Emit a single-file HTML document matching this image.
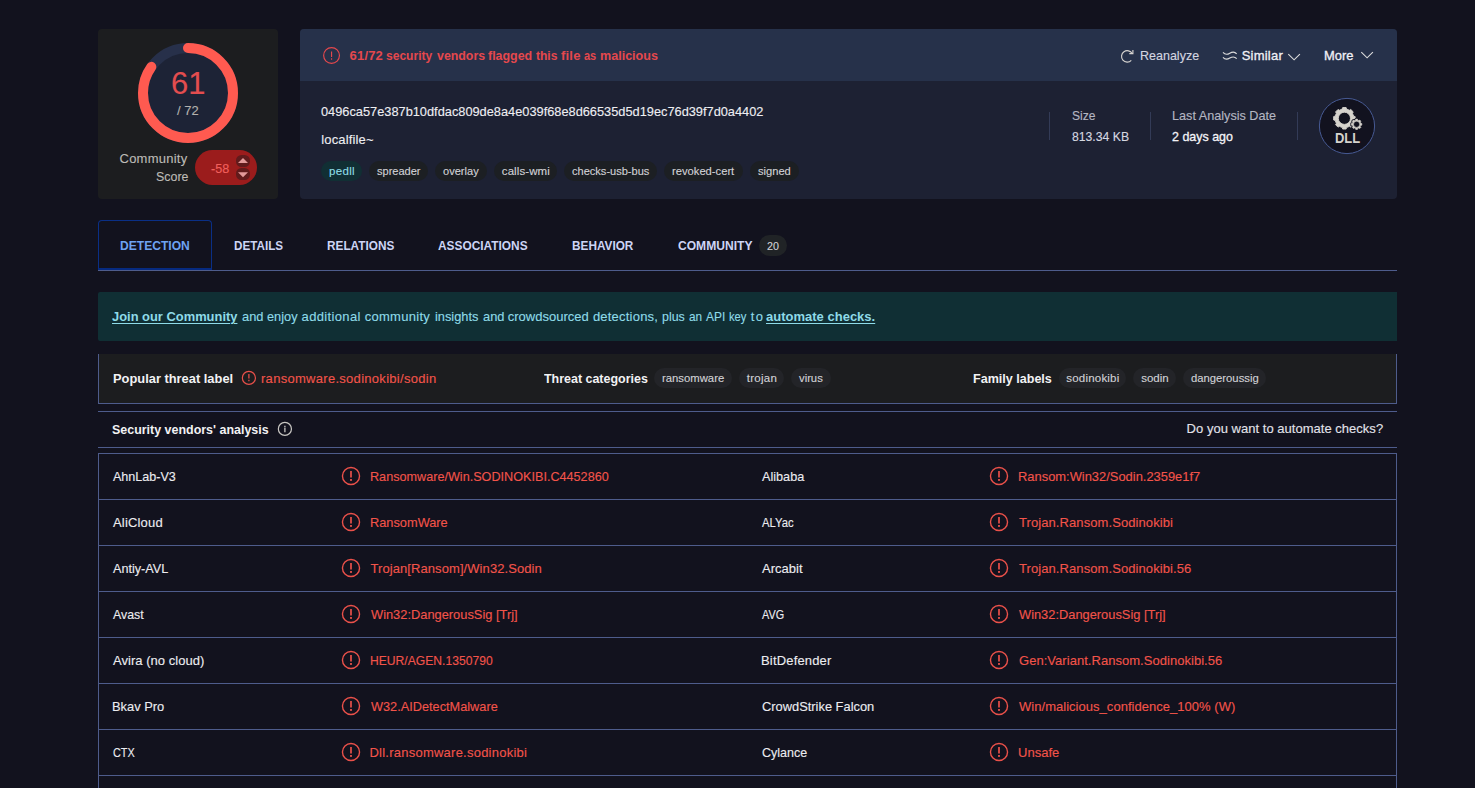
<!DOCTYPE html>
<html lang="en">
<head>
<meta charset="utf-8">
<title>VirusTotal - File - 0496ca57e387b10dfdac809de8a4e039f68e8d66535d5d19ec76d39f7d0a4402</title>
<style>
*{box-sizing:border-box;margin:0;padding:0}
html,body{width:1475px;height:788px;overflow:hidden;background:#12121e}
body{position:relative;font-family:"Liberation Sans",sans-serif;color:#e6e6ec}
.b{position:absolute;display:block}
.t{position:absolute;display:block;white-space:nowrap;line-height:20px;height:20px;transform-origin:0 0;-webkit-text-stroke:0.12px currentColor}
.p{position:absolute;display:block;border-radius:11px}
.a{position:absolute;display:block;overflow:visible}
svg{position:absolute;display:block;overflow:visible}
</style>
</head>
<body>
<!-- score card -->
<div class="b" style="left:98px;top:28.8px;width:180px;height:169.8px;background:#1c1d1f;border-radius:4px"></div>
<svg style="left:138px;top:43px" width="100" height="100" viewBox="-50 -50 100 100">
  <circle r="45" fill="#1d2336" stroke="#27304a" stroke-width="10"/>
  <circle r="45" fill="none" stroke="#ff5a50" stroke-width="10" stroke-linecap="round" stroke-dasharray="239.55 282.74" transform="rotate(-90)"/>
</svg>
<div class="b" style="left:195px;top:150px;width:62px;height:35px;border-radius:17.5px;background:#9b1c1c"></div>
<div class="b" style="left:236.2px;top:155.2px;width:13.8px;height:11.8px;border-radius:5.5px;background:#611b1c"></div>
<div class="b" style="left:236.2px;top:168.3px;width:13.8px;height:11.3px;border-radius:5.5px;background:#611b1c"></div>
<svg style="left:236px;top:155px" width="14" height="26" viewBox="0 0 14 26"><path d="M2 8.1L7 3.1L12 8.1Z" fill="#e39a9a"/><path d="M2 17.3L7 22.3L12 17.3Z" fill="#e39a9a"/></svg>

<!-- header card -->
<div class="b" style="left:299.5px;top:29.4px;width:1097.2px;height:169.3px;background:#1d2133;border-radius:4px;overflow:hidden"><div class="b" style="left:0;top:0;width:1098px;height:51.6px;background:#26314a"></div></div>
<div class="b" style="left:1049px;top:112px;width:1px;height:28px;background:#333b57"></div>
<div class="b" style="left:1150px;top:112px;width:1px;height:28px;background:#333b57"></div>
<div class="b" style="left:1297px;top:112px;width:1px;height:28px;background:#333b57"></div>
<!-- DLL icon -->
<svg style="left:1319px;top:98px" width="56" height="56" viewBox="-28 -28 56 56">
  <circle r="27.6" fill="#12121f" stroke="#475a94" stroke-width="1"/>
  <path fill="#d6d3cd" fill-rule="evenodd" stroke="#d6d3cd" stroke-width="0.9" stroke-linejoin="round" d="M-4.74 -16.96 L-4.31 -18.47 L-0.89 -18.47 L-0.46 -16.96 L2.43 -15.76 L3.81 -16.52 L6.22 -14.11 L5.46 -12.73 L6.66 -9.84 L8.17 -9.41 L8.17 -5.99 L6.66 -5.56 L5.46 -2.67 L6.22 -1.29 L3.81 1.12 L2.43 0.36 L-0.46 1.56 L-0.89 3.07 L-4.31 3.07 L-4.74 1.56 L-7.63 0.36 L-9.01 1.12 L-11.42 -1.29 L-10.66 -2.67 L-11.86 -5.56 L-13.37 -5.99 L-13.37 -9.41 L-11.86 -9.84 L-10.66 -12.73 L-11.42 -14.11 L-9.01 -16.52 L-7.63 -15.76Z M-8.70 -7.70 a6.1 6.1 0 1 0 12.2 0 a6.1 6.1 0 1 0 -12.2 0Z"/>
  <path fill="#12121f" stroke="#12121f" stroke-width="2.2" stroke-linejoin="round" d="M8.56 -5.87 L8.77 -6.93 L10.43 -6.93 L10.64 -5.87 L11.81 -5.39 L12.72 -5.99 L13.89 -4.82 L13.29 -3.91 L13.77 -2.74 L14.83 -2.53 L14.83 -0.87 L13.77 -0.66 L13.29 0.51 L13.89 1.42 L12.72 2.59 L11.81 1.99 L10.64 2.47 L10.43 3.53 L8.77 3.53 L8.56 2.47 L7.39 1.99 L6.48 2.59 L5.31 1.42 L5.91 0.51 L5.43 -0.66 L4.37 -0.87 L4.37 -2.53 L5.43 -2.74 L5.91 -3.91 L5.31 -4.82 L6.48 -5.99 L7.39 -5.39Z"/>
  <path fill="#d6d3cd" fill-rule="evenodd" stroke="#d6d3cd" stroke-width="0.6" stroke-linejoin="round" d="M8.56 -5.87 L8.77 -6.93 L10.43 -6.93 L10.64 -5.87 L11.81 -5.39 L12.72 -5.99 L13.89 -4.82 L13.29 -3.91 L13.77 -2.74 L14.83 -2.53 L14.83 -0.87 L13.77 -0.66 L13.29 0.51 L13.89 1.42 L12.72 2.59 L11.81 1.99 L10.64 2.47 L10.43 3.53 L8.77 3.53 L8.56 2.47 L7.39 1.99 L6.48 2.59 L5.31 1.42 L5.91 0.51 L5.43 -0.66 L4.37 -0.87 L4.37 -2.53 L5.43 -2.74 L5.91 -3.91 L5.31 -4.82 L6.48 -5.99 L7.39 -5.39Z M6.50 -1.70 a3.1 3.1 0 1 0 6.2 0 a3.1 3.1 0 1 0 -6.2 0Z"/>
</svg>

<!-- tabs -->
<div class="b" style="left:98px;top:270px;width:1299px;height:1px;background:#4e5c8c"></div>
<div class="b" style="left:98px;top:220px;width:114px;height:50px;border:1px solid #0a2f86;border-bottom:2px solid #062a80;border-radius:4px 4px 0 0"></div>

<!-- banner -->
<div class="b" style="left:98px;top:292px;width:1299px;height:49px;background:#102f34;border-radius:2px 0 0 2px"></div>

<!-- threat row -->
<div class="b" style="left:98px;top:354px;width:1299px;height:50px;background:#1c1d1f;border:1px solid #4e5c8c;border-top:none"></div>

<!-- vendors header -->
<div class="b" style="left:98px;top:411px;width:1299px;height:1px;background:#4e5c8c"></div>
<div class="b" style="left:98px;top:447px;width:1299px;height:1px;background:#4e5c8c"></div>

<!-- table -->
<div class="b" style="left:98px;top:453px;width:1299px;height:400px;border:1px solid #4e5c8c;border-bottom:none"></div>
<div class="b" style="left:98px;top:499px;width:1299px;height:1px;background:#4e5c8c"></div>
<div class="b" style="left:98px;top:545px;width:1299px;height:1px;background:#4e5c8c"></div>
<div class="b" style="left:98px;top:591px;width:1299px;height:1px;background:#4e5c8c"></div>
<div class="b" style="left:98px;top:637px;width:1299px;height:1px;background:#4e5c8c"></div>
<div class="b" style="left:98px;top:683px;width:1299px;height:1px;background:#4e5c8c"></div>
<div class="b" style="left:98px;top:729px;width:1299px;height:1px;background:#4e5c8c"></div>
<div class="b" style="left:98px;top:775px;width:1299px;height:1px;background:#4e5c8c"></div>


<!-- header icons -->
<svg style="left:321px;top:45px" width="21" height="21" viewBox="-10.5 -10.5 21 21"><g transform="translate(0.05,-0.05)"><circle r="7.9" fill="none" stroke="#e5484d" stroke-width="1.15"/><path d="M0 -4V1.6M0 2.8V4.4" stroke="#e5484d" stroke-width="1.15" fill="none"/></g></svg>
<svg style="left:1117px;top:46px" width="20" height="20" viewBox="1117 46 20 20"><path d="M1132.2 53.6A5.7 5.7 0 1 0 1131.3 60.4" fill="none" stroke="#d6d3cf" stroke-width="1.15"/><path d="M1132.9 49.9V53.6H1129.3" fill="none" stroke="#d6d3cf" stroke-width="1.15"/></svg>
<svg style="left:1220px;top:46px" width="20" height="20" viewBox="1220 46 20 20"><path d="M1223 52.4C1225 54.8 1227.5 54.6 1229.8 53.2S1234.4 51.2 1236.7 53.8M1223 57.3C1225 59.7 1227.5 59.5 1229.8 58.1S1234.4 56.1 1236.7 58.7" fill="none" stroke="#dcdcdc" stroke-width="1.15"/></svg>
<svg style="left:1285px;top:46px" width="20" height="20" viewBox="1285 46 20 20"><path d="M1288.3 54.2L1294.1 59.8L1299.9 54.2" fill="none" stroke="#dcdcdc" stroke-width="1.15"/></svg>
<svg style="left:1358px;top:46px" width="20" height="20" viewBox="1358 46 20 20"><path d="M1361.3 52.2L1367.1 57.8L1372.9 52.2" fill="none" stroke="#dcdcdc" stroke-width="1.15"/></svg>
<!-- threat label icon -->
<svg style="left:239px;top:368px" width="20" height="20" viewBox="-10 -10 20 20"><g transform="translate(-0.1,-0.1)"><circle r="6.55" fill="none" stroke="#e8504a" stroke-width="1.2"/><path d="M0 -3.9V0.7M0 1.8V3.3" stroke="#e8504a" stroke-width="1.25" fill="none"/></g></svg>
<!-- info icon -->
<svg style="left:275px;top:419px" width="20" height="20" viewBox="-10 -10 20 20"><g transform="translate(-0.1,-0.1)"><circle r="6.55" fill="none" stroke="#c8c6c2" stroke-width="1.2"/><path d="M0 -3.1V-1.9M0 -1.3V3.3" stroke="#c8c6c2" stroke-width="1.3" fill="none"/></g></svg>
<i class="p" style="left:320.8px;top:160.8px;width:41.0px;height:20.2px;background:#112f34"></i><i class="p" style="left:369.3px;top:160.8px;width:58.6px;height:20.2px;background:#1c1f23"></i><i class="p" style="left:435.3px;top:160.8px;width:51.9px;height:20.2px;background:#1c1f23"></i><i class="p" style="left:494.3px;top:160.8px;width:62.4px;height:20.2px;background:#1c1f23"></i><i class="p" style="left:564.0px;top:160.8px;width:93.2px;height:20.2px;background:#1c1f23"></i><i class="p" style="left:664.0px;top:160.8px;width:79.2px;height:20.2px;background:#1c1f23"></i><i class="p" style="left:750.0px;top:160.8px;width:48.5px;height:20.2px;background:#1c1f23"></i><i class="p" style="left:758.8px;top:235.2px;width:28.5px;height:21.0px;background:#202326"></i><i class="p" style="left:654.2px;top:368.0px;width:77.8px;height:20.0px;background:#232428"></i><i class="p" style="left:739.0px;top:368.0px;width:45.0px;height:20.0px;background:#232428"></i><i class="p" style="left:791.0px;top:368.0px;width:40.0px;height:20.0px;background:#232428"></i><i class="p" style="left:1059.2px;top:368.0px;width:67.0px;height:20.0px;background:#232428"></i><i class="p" style="left:1133.4px;top:368.0px;width:42.7px;height:20.0px;background:#232428"></i><i class="p" style="left:1183.0px;top:368.0px;width:83.0px;height:20.0px;background:#232428"></i>
<svg class="a" style="left:341px;top:466px" width="20" height="20" viewBox="-10 -10 20 20"><circle r="8.55" fill="none" stroke="#ea514a" stroke-width="1.4"/><path d="M0 -4.9V1.4" stroke="#ea514a" stroke-width="1.7" fill="none"/><rect x="-0.9" y="3" width="1.8" height="1.9" fill="#ea514a"/></svg><svg class="a" style="left:988.8px;top:466px" width="20" height="20" viewBox="-10 -10 20 20"><circle r="8.55" fill="none" stroke="#ea514a" stroke-width="1.4"/><path d="M0 -4.9V1.4" stroke="#ea514a" stroke-width="1.7" fill="none"/><rect x="-0.9" y="3" width="1.8" height="1.9" fill="#ea514a"/></svg><svg class="a" style="left:341px;top:512px" width="20" height="20" viewBox="-10 -10 20 20"><circle r="8.55" fill="none" stroke="#ea514a" stroke-width="1.4"/><path d="M0 -4.9V1.4" stroke="#ea514a" stroke-width="1.7" fill="none"/><rect x="-0.9" y="3" width="1.8" height="1.9" fill="#ea514a"/></svg><svg class="a" style="left:988.8px;top:512px" width="20" height="20" viewBox="-10 -10 20 20"><circle r="8.55" fill="none" stroke="#ea514a" stroke-width="1.4"/><path d="M0 -4.9V1.4" stroke="#ea514a" stroke-width="1.7" fill="none"/><rect x="-0.9" y="3" width="1.8" height="1.9" fill="#ea514a"/></svg><svg class="a" style="left:341px;top:558px" width="20" height="20" viewBox="-10 -10 20 20"><circle r="8.55" fill="none" stroke="#ea514a" stroke-width="1.4"/><path d="M0 -4.9V1.4" stroke="#ea514a" stroke-width="1.7" fill="none"/><rect x="-0.9" y="3" width="1.8" height="1.9" fill="#ea514a"/></svg><svg class="a" style="left:988.8px;top:558px" width="20" height="20" viewBox="-10 -10 20 20"><circle r="8.55" fill="none" stroke="#ea514a" stroke-width="1.4"/><path d="M0 -4.9V1.4" stroke="#ea514a" stroke-width="1.7" fill="none"/><rect x="-0.9" y="3" width="1.8" height="1.9" fill="#ea514a"/></svg><svg class="a" style="left:341px;top:604px" width="20" height="20" viewBox="-10 -10 20 20"><circle r="8.55" fill="none" stroke="#ea514a" stroke-width="1.4"/><path d="M0 -4.9V1.4" stroke="#ea514a" stroke-width="1.7" fill="none"/><rect x="-0.9" y="3" width="1.8" height="1.9" fill="#ea514a"/></svg><svg class="a" style="left:988.8px;top:604px" width="20" height="20" viewBox="-10 -10 20 20"><circle r="8.55" fill="none" stroke="#ea514a" stroke-width="1.4"/><path d="M0 -4.9V1.4" stroke="#ea514a" stroke-width="1.7" fill="none"/><rect x="-0.9" y="3" width="1.8" height="1.9" fill="#ea514a"/></svg><svg class="a" style="left:341px;top:650px" width="20" height="20" viewBox="-10 -10 20 20"><circle r="8.55" fill="none" stroke="#ea514a" stroke-width="1.4"/><path d="M0 -4.9V1.4" stroke="#ea514a" stroke-width="1.7" fill="none"/><rect x="-0.9" y="3" width="1.8" height="1.9" fill="#ea514a"/></svg><svg class="a" style="left:988.8px;top:650px" width="20" height="20" viewBox="-10 -10 20 20"><circle r="8.55" fill="none" stroke="#ea514a" stroke-width="1.4"/><path d="M0 -4.9V1.4" stroke="#ea514a" stroke-width="1.7" fill="none"/><rect x="-0.9" y="3" width="1.8" height="1.9" fill="#ea514a"/></svg><svg class="a" style="left:341px;top:696px" width="20" height="20" viewBox="-10 -10 20 20"><circle r="8.55" fill="none" stroke="#ea514a" stroke-width="1.4"/><path d="M0 -4.9V1.4" stroke="#ea514a" stroke-width="1.7" fill="none"/><rect x="-0.9" y="3" width="1.8" height="1.9" fill="#ea514a"/></svg><svg class="a" style="left:988.8px;top:696px" width="20" height="20" viewBox="-10 -10 20 20"><circle r="8.55" fill="none" stroke="#ea514a" stroke-width="1.4"/><path d="M0 -4.9V1.4" stroke="#ea514a" stroke-width="1.7" fill="none"/><rect x="-0.9" y="3" width="1.8" height="1.9" fill="#ea514a"/></svg><svg class="a" style="left:341px;top:742px" width="20" height="20" viewBox="-10 -10 20 20"><circle r="8.55" fill="none" stroke="#ea514a" stroke-width="1.4"/><path d="M0 -4.9V1.4" stroke="#ea514a" stroke-width="1.7" fill="none"/><rect x="-0.9" y="3" width="1.8" height="1.9" fill="#ea514a"/></svg><svg class="a" style="left:988.8px;top:742px" width="20" height="20" viewBox="-10 -10 20 20"><circle r="8.55" fill="none" stroke="#ea514a" stroke-width="1.4"/><path d="M0 -4.9V1.4" stroke="#ea514a" stroke-width="1.7" fill="none"/><rect x="-0.9" y="3" width="1.8" height="1.9" fill="#ea514a"/></svg>
<span class="t" style="left:170.80px;top:74px;font-size:31px;color:#e34d4f;transform:scaleX(0.9987);">61</span>
<span class="t" style="left:177.20px;top:101px;font-size:13px;color:#b4b2ae;transform:scaleX(0.9975);">/ 72</span>
<span class="t" style="left:119.50px;top:149px;font-size:13px;color:#bdbbb6;letter-spacing:0.245px;">Community</span>
<span class="t" style="left:155.50px;top:167px;font-size:13px;color:#bdbbb6;transform:scaleX(0.9546);">Score</span>
<span class="t" style="left:211.00px;top:159px;font-size:13px;color:#f2605c;transform:scaleX(0.9699);">-58</span>
<span class="t" style="left:349.60px;top:46px;font-size:13px;color:#e5484d;letter-spacing:0.175px;font-weight:700;-webkit-text-stroke:0;">61/72</span>
<span class="t" style="left:386.10px;top:46px;font-size:13px;color:#e5484d;font-weight:700;-webkit-text-stroke:0;transform:scaleX(0.9263);">security</span>
<span class="t" style="left:437.00px;top:46px;font-size:13px;color:#e5484d;font-weight:700;-webkit-text-stroke:0;transform:scaleX(0.9515);">vendors</span>
<span class="t" style="left:488.10px;top:46px;font-size:13px;color:#e5484d;font-weight:700;-webkit-text-stroke:0;transform:scaleX(0.9550);">flagged</span>
<span class="t" style="left:536.00px;top:46px;font-size:13px;color:#e5484d;font-weight:700;-webkit-text-stroke:0;transform:scaleX(0.9265);">this</span>
<span class="t" style="left:561.00px;top:46px;font-size:13px;color:#e5484d;letter-spacing:0.216px;font-weight:700;-webkit-text-stroke:0;">file</span>
<span class="t" style="left:583.90px;top:46px;font-size:13px;color:#e5484d;font-weight:700;-webkit-text-stroke:0;transform:scaleX(0.8433);">as</span>
<span class="t" style="left:599.60px;top:46px;font-size:13px;color:#e5484d;font-weight:700;-webkit-text-stroke:0;transform:scaleX(0.9659);">malicious</span>
<span class="t" style="left:1140.44px;top:46px;font-size:13px;color:#d4d6e0;transform:scaleX(0.9619);">Reanalyze</span>
<span class="t" style="left:1241.70px;top:46px;font-size:13px;color:#f0f0f6;letter-spacing:0.218px;-webkit-text-stroke:0.3px #f0f0f6;">Similar</span>
<span class="t" style="left:1323.81px;top:46px;font-size:13px;color:#f0f0f6;transform:scaleX(0.9934);-webkit-text-stroke:0.3px #f0f0f6;">More</span>
<span class="t" style="left:320.90px;top:102px;font-size:13px;color:#eeeef2;transform:scaleX(0.9839);">0496ca57e387b10dfdac809de8a4e039f68e8d66535d5d19ec76d39f7d0a4402</span>
<span class="t" style="left:321.30px;top:130px;font-size:13px;color:#eeeef2;letter-spacing:0.150px;">localfile~</span>
<span class="t" style="left:1071.70px;top:106px;font-size:13px;color:#b4b6c2;transform:scaleX(0.9298);">Size</span>
<span class="t" style="left:1071.70px;top:127px;font-size:13px;color:#d6d8e0;transform:scaleX(0.9393);">813.34 KB</span>
<span class="t" style="left:1172.03px;top:106px;font-size:13px;color:#b4b6c2;transform:scaleX(0.9734);">Last Analysis Date</span>
<span class="t" style="left:1172.20px;top:127px;font-size:13px;color:#f4f4f8;transform:scaleX(0.9578);-webkit-text-stroke:0.3px #f4f4f8;">2 days ago</span>
<span class="t" style="left:1334.50px;top:128px;font-size:14px;color:#d6d3cd;font-weight:700;-webkit-text-stroke:0;transform:scaleX(0.9255);">DLL</span>
<span class="t" style="left:329.00px;top:161px;font-size:11.5px;color:#8fdde6;letter-spacing:0.314px;">pedll</span>
<span class="t" style="left:376.80px;top:161px;font-size:11.5px;color:#d2d2d6;transform:scaleX(0.9592);">spreader</span>
<span class="t" style="left:443.20px;top:161px;font-size:11.5px;color:#d2d2d6;transform:scaleX(0.9619);">overlay</span>
<span class="t" style="left:501.80px;top:161px;font-size:11.5px;color:#d2d2d6;letter-spacing:0.085px;">calls-wmi</span>
<span class="t" style="left:572.20px;top:161px;font-size:11.5px;color:#d2d2d6;transform:scaleX(0.9606);">checks-usb-bus</span>
<span class="t" style="left:672.40px;top:161px;font-size:11.5px;color:#d2d2d6;transform:scaleX(0.9735);">revoked-cert</span>
<span class="t" style="left:757.90px;top:161px;font-size:11.5px;color:#d2d2d6;transform:scaleX(0.9674);">signed</span>
<span class="t" style="left:120.40px;top:236px;font-size:13px;color:#6ea3f2;font-weight:700;-webkit-text-stroke:0;transform:scaleX(0.9288);">DETECTION</span>
<span class="t" style="left:234.00px;top:236px;font-size:13px;color:#cdd5f5;font-weight:700;-webkit-text-stroke:0;transform:scaleX(0.8986);">DETAILS</span>
<span class="t" style="left:327.30px;top:236px;font-size:13px;color:#cdd5f5;font-weight:700;-webkit-text-stroke:0;transform:scaleX(0.9077);">RELATIONS</span>
<span class="t" style="left:438.20px;top:236px;font-size:13px;color:#cdd5f5;font-weight:700;-webkit-text-stroke:0;transform:scaleX(0.9144);">ASSOCIATIONS</span>
<span class="t" style="left:572.20px;top:236px;font-size:13px;color:#cdd5f5;font-weight:700;-webkit-text-stroke:0;transform:scaleX(0.9068);">BEHAVIOR</span>
<span class="t" style="left:677.80px;top:236px;font-size:13px;color:#cdd5f5;font-weight:700;-webkit-text-stroke:0;transform:scaleX(0.9293);">COMMUNITY</span>
<span class="t" style="left:766.80px;top:236px;font-size:11px;color:#d2d2d6;transform:scaleX(0.9738);">20</span>
<span class="t" style="left:112.40px;top:307px;font-size:13px;color:#8edbe8;font-weight:700;-webkit-text-stroke:0;transform:scaleX(0.9925);text-decoration:underline;text-underline-offset:2px;text-decoration-thickness:1.4px;">Join our Community</span>
<span class="t" style="left:241.50px;top:307px;font-size:13px;color:#8edbe8;transform:scaleX(0.9879);">and</span>
<span class="t" style="left:266.90px;top:307px;font-size:13px;color:#8edbe8;transform:scaleX(0.9817);">enjoy</span>
<span class="t" style="left:301.60px;top:307px;font-size:13px;color:#8edbe8;letter-spacing:0.348px;">additional</span>
<span class="t" style="left:364.70px;top:307px;font-size:13px;color:#8edbe8;letter-spacing:0.281px;">community</span>
<span class="t" style="left:434.60px;top:307px;font-size:13px;color:#8edbe8;transform:scaleX(0.9848);">insights</span>
<span class="t" style="left:482.50px;top:307px;font-size:13px;color:#8edbe8;transform:scaleX(0.9879);">and</span>
<span class="t" style="left:507.70px;top:307px;font-size:13px;color:#8edbe8;letter-spacing:0.009px;">crowdsourced</span>
<span class="t" style="left:592.90px;top:307px;font-size:13px;color:#8edbe8;letter-spacing:0.214px;">detections,</span>
<span class="t" style="left:661.50px;top:307px;font-size:13px;color:#8edbe8;transform:scaleX(0.9528);">plus</span>
<span class="t" style="left:689.00px;top:307px;font-size:13px;color:#8edbe8;transform:scaleX(0.9065);">an</span>
<span class="t" style="left:705.90px;top:307px;font-size:13px;color:#8edbe8;transform:scaleX(0.9193);">API</span>
<span class="t" style="left:728.90px;top:307px;font-size:13px;color:#8edbe8;transform:scaleX(0.8635);">key</span>
<span class="t" style="left:750.80px;top:307px;font-size:13px;color:#8edbe8;letter-spacing:1.388px;">to</span>
<span class="t" style="left:766.00px;top:307px;font-size:13px;color:#8edbe8;letter-spacing:0.007px;font-weight:700;-webkit-text-stroke:0;text-decoration:underline;text-underline-offset:2px;text-decoration-thickness:1.4px;">automate checks.</span>
<span class="t" style="left:113.20px;top:369px;font-size:13px;color:#f2f2f4;font-weight:700;-webkit-text-stroke:0;transform:scaleX(0.9897);">Popular threat label</span>
<span class="t" style="left:261.00px;top:369px;font-size:13px;color:#f2544a;letter-spacing:0.288px;">ransomware.sodinokibi/sodin</span>
<span class="t" style="left:543.70px;top:369px;font-size:13px;color:#f2f2f4;font-weight:700;-webkit-text-stroke:0;transform:scaleX(0.9580);">Threat categories</span>
<span class="t" style="left:973.40px;top:369px;font-size:13px;color:#f2f2f4;font-weight:700;-webkit-text-stroke:0;transform:scaleX(0.9654);">Family labels</span>
<span class="t" style="left:662.20px;top:368px;font-size:11.5px;color:#d2d2d6;transform:scaleX(0.9829);">ransomware</span>
<span class="t" style="left:746.80px;top:368px;font-size:11.5px;color:#d2d2d6;letter-spacing:0.266px;">trojan</span>
<span class="t" style="left:799.00px;top:368px;font-size:11.5px;color:#d2d2d6;transform:scaleX(0.9784);">virus</span>
<span class="t" style="left:1066.30px;top:368px;font-size:11.5px;color:#d2d2d6;letter-spacing:0.201px;">sodinokibi</span>
<span class="t" style="left:1141.20px;top:368px;font-size:11.5px;color:#d2d2d6;letter-spacing:0.001px;">sodin</span>
<span class="t" style="left:1190.80px;top:368px;font-size:11.5px;color:#d2d2d6;transform:scaleX(0.9803);">dangeroussig</span>
<span class="t" style="left:111.80px;top:420px;font-size:13px;color:#f2f2f4;font-weight:700;-webkit-text-stroke:0;transform:scaleX(0.9579);">Security vendors&#x27; analysis</span>
<span class="t" style="left:1186.60px;top:419px;font-size:13px;color:#e2e2ea;letter-spacing:0.023px;">Do you want to automate checks?</span>
<span class="t" style="left:113.00px;top:467px;font-size:13px;color:#ececf0;transform:scaleX(0.9657);">AhnLab-V3</span>
<span class="t" style="left:369.53px;top:467px;font-size:13px;color:#f2544a;transform:scaleX(0.9717);">Ransomware/Win.SODINOKIBI.C4452860</span>
<span class="t" style="left:762.00px;top:467px;font-size:13px;color:#ececf0;transform:scaleX(0.9742);">Alibaba</span>
<span class="t" style="left:1018.01px;top:467px;font-size:13px;color:#f2544a;transform:scaleX(0.9927);">Ransom:Win32/Sodin.2359e1f7</span>
<span class="t" style="left:113.00px;top:513px;font-size:13px;color:#ececf0;letter-spacing:0.174px;">AliCloud</span>
<span class="t" style="left:369.52px;top:513px;font-size:13px;color:#f2544a;transform:scaleX(0.9839);">RansomWare</span>
<span class="t" style="left:762.00px;top:513px;font-size:13px;color:#ececf0;transform:scaleX(0.8679);">ALYac</span>
<span class="t" style="left:1019.00px;top:513px;font-size:13px;color:#f2544a;letter-spacing:0.083px;">Trojan.Ransom.Sodinokibi</span>
<span class="t" style="left:113.00px;top:559px;font-size:13px;color:#ececf0;transform:scaleX(0.9716);">Antiy-AVL</span>
<span class="t" style="left:370.50px;top:559px;font-size:13px;color:#f2544a;letter-spacing:0.077px;">Trojan[Ransom]/Win32.Sodin</span>
<span class="t" style="left:762.00px;top:559px;font-size:13px;color:#ececf0;letter-spacing:0.025px;">Arcabit</span>
<span class="t" style="left:1019.00px;top:559px;font-size:13px;color:#f2544a;letter-spacing:0.084px;">Trojan.Ransom.Sodinokibi.56</span>
<span class="t" style="left:113.00px;top:605px;font-size:13px;color:#ececf0;transform:scaleX(0.9490);">Avast</span>
<span class="t" style="left:370.50px;top:605px;font-size:13px;color:#f2544a;transform:scaleX(0.9882);">Win32:DangerousSig [Trj]</span>
<span class="t" style="left:762.00px;top:605px;font-size:13px;color:#ececf0;transform:scaleX(0.8341);">AVG</span>
<span class="t" style="left:1019.00px;top:605px;font-size:13px;color:#f2544a;transform:scaleX(0.9882);">Win32:DangerousSig [Trj]</span>
<span class="t" style="left:113.00px;top:651px;font-size:13px;color:#ececf0;letter-spacing:0.035px;">Avira (no cloud)</span>
<span class="t" style="left:369.57px;top:651px;font-size:13px;color:#f2544a;transform:scaleX(0.9326);">HEUR/AGEN.1350790</span>
<span class="t" style="left:761.00px;top:651px;font-size:13px;color:#ececf0;letter-spacing:0.168px;">BitDefender</span>
<span class="t" style="left:1019.00px;top:651px;font-size:13px;color:#f2544a;letter-spacing:0.037px;">Gen:Variant.Ransom.Sodinokibi.56</span>
<span class="t" style="left:112.01px;top:697px;font-size:13px;color:#ececf0;transform:scaleX(0.9900);">Bkav Pro</span>
<span class="t" style="left:370.50px;top:697px;font-size:13px;color:#f2544a;transform:scaleX(0.9799);">W32.AIDetectMalware</span>
<span class="t" style="left:762.00px;top:697px;font-size:13px;color:#ececf0;transform:scaleX(0.9894);">CrowdStrike Falcon</span>
<span class="t" style="left:1019.00px;top:697px;font-size:13px;color:#f2544a;letter-spacing:0.032px;">Win/malicious_confidence_100% (W)</span>
<span class="t" style="left:113.00px;top:743px;font-size:13px;color:#ececf0;transform:scaleX(0.8356);">CTX</span>
<span class="t" style="left:369.50px;top:743px;font-size:13px;color:#f2544a;letter-spacing:0.236px;">Dll.ransomware.sodinokibi</span>
<span class="t" style="left:762.00px;top:743px;font-size:13px;color:#ececf0;transform:scaleX(0.9628);">Cylance</span>
<span class="t" style="left:1018.00px;top:743px;font-size:13px;color:#f2544a;letter-spacing:0.008px;">Unsafe</span>
</body>
</html>
